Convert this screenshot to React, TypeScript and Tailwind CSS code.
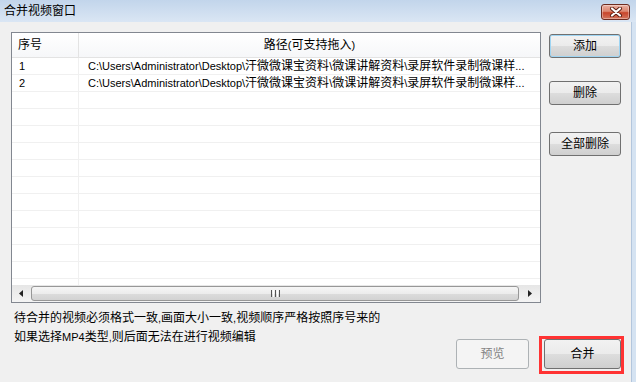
import React from "react";

function Mixed({ text }: { text: string }) {
  const parts = text.split(/([\x00-\x7f]+)/).filter((p) => p !== "");
  return (
    <>
      {parts.map((p, i) =>
        /^[\x00-\x7f]+$/.test(p) ? (
          <span key={i} className="text-[11px]">
            {p}
          </span>
        ) : (
          <span key={i}>{p}</span>
        )
      )}
    </>
  );
}

const rows = [
  "C:\\Users\\Administrator\\Desktop\\汗微微课宝资料\\微课讲解资料\\录屏软件录制微课样...",
  "C:\\Users\\Administrator\\Desktop\\汗微微课宝资料\\微课讲解资料\\录屏软件录制微课样...",
];

const btn =
  "w-[72px] h-[23px] rounded-[3px] border border-[#707070] bg-[linear-gradient(to_bottom,#f2f2f2_0%,#ebebeb_50%,#dddddd_50%,#cfcfcf_100%)] text-black flex items-center justify-center leading-none";

function CloseButton() {
  return (
    <div className="w-[29px] h-[16px] rounded-[3px] border border-[#6e2b20] bg-[linear-gradient(to_bottom,#eab0a3_0%,#dc8670_45%,#c8452b_55%,#d3755e_100%)] shadow-[inset_0_0_0_1px_rgba(255,255,255,0.35)] flex items-center justify-center">
      <svg width="14" height="10" viewBox="0 0 14 10">
        <path d="M3 1.5 L11 8.5 M11 1.5 L3 8.5" stroke="#5a1c12" strokeWidth="4" strokeLinecap="round" />
        <path d="M3 1.5 L11 8.5 M11 1.5 L3 8.5" stroke="#ffffff" strokeWidth="2.2" strokeLinecap="round" />
      </svg>
    </div>
  );
}

export default function App() {
  return (
    <div className="w-[636px] h-[382px] overflow-hidden bg-[#f0f0f0] flex flex-col text-[12px] text-black font-['Liberation_Sans','Noto_Sans_CJK_SC',sans-serif]">
      {/* title bar */}
      <div className="h-[22px] shrink-0 flex items-center pl-[4px] pr-[6px] bg-[linear-gradient(to_bottom,#c2d5eb,#dae6f4)]">
        <span className="leading-none">合并视频窗口</span>
        <div className="ml-auto pt-[1px]">
          <CloseButton />
        </div>
      </div>

      <div className="flex flex-1">
        <div className="flex-1 flex flex-col pl-[11px] pr-[7px] pt-[10px]">
          <div className="flex">
            {/* list view */}
            <div className="w-[530px] h-[271px] border border-[#828790] bg-white flex flex-col">
              <div className="h-[25px] shrink-0 flex border-b border-[#e3e3e3] bg-[linear-gradient(to_bottom,#ffffff,#f6f7f9)]">
                <div className="w-[67px] pl-[6px] flex items-center border-r border-[#e3e3e3]">序号</div>
                <div className="flex-1 flex items-center justify-center">
                  <Mixed text="路径(可支持拖入)" />
                </div>
              </div>
              <div className="flex-1 overflow-hidden">
                {Array.from({ length: 14 }).map((_, i) => (
                  <div key={i} className="h-[17px] flex border-b border-[#f0f0f0] leading-[16px]">
                    <div className="w-[67px] pl-[7px] border-r border-[#f0f0f0] whitespace-nowrap">
                      {i < rows.length && <span className="text-[11px]">{i + 1}</span>}
                    </div>
                    <div className="flex-1 pl-[9px] whitespace-nowrap overflow-hidden">
                      {i < rows.length && <Mixed text={rows[i]} />}
                    </div>
                  </div>
                ))}
              </div>
              {/* horizontal scrollbar */}
              <div className="h-[17px] shrink-0 flex items-center bg-[linear-gradient(to_bottom,#e6e6e6,#f4f4f4)]">
                <div className="w-[18px] h-full flex items-center justify-center">
                  <svg width="4" height="7" viewBox="0 0 4 7">
                    <path d="M4 0 L0 3.5 L4 7 Z" fill="#222" />
                  </svg>
                </div>
                <div className="ml-[1px] w-[488px] h-[15px] rounded-[3px] border border-[#979797] bg-[linear-gradient(to_bottom,#f6f6f6_0%,#ececec_50%,#dcdcdc_50%,#d2d2d2_100%)] flex items-center justify-center">
                  <div className="flex gap-[1px]">
                    <div className="w-[1px] h-[7px] bg-[#555]" />
                    <div className="w-[1px] h-[7px] bg-[#fff]" />
                    <div className="w-[1px] h-[7px] bg-[#555]" />
                    <div className="w-[1px] h-[7px] bg-[#fff]" />
                    <div className="w-[1px] h-[7px] bg-[#555]" />
                  </div>
                </div>
                <div className="flex-1 h-full flex items-center justify-center">
                  <svg width="4" height="7" viewBox="0 0 4 7">
                    <path d="M0 0 L4 3.5 L0 7 Z" fill="#222" />
                  </svg>
                </div>
              </div>
            </div>

            {/* right buttons */}
            <div className="ml-[8px] flex flex-col">
              <button className={`${btn} mt-[2px] h-[24px] border-[#3c7fb1] shadow-[inset_0_0_0_1px_#9fd5f3]`}>添加</button>
              <button className={`${btn} mt-[23px] h-[24px]`}>删除</button>
              <button className={`${btn} mt-[27px] h-[24px]`}>全部删除</button>
            </div>
          </div>

          {/* bottom area */}
          <div className="flex">
            <div className="ml-[3px] mt-[6px] leading-[19px]">
              <div>
                <Mixed text="待合并的视频必须格式一致,画面大小一致,视频顺序严格按照序号来的" />
              </div>
              <div>
                <Mixed text="如果选择MP4类型,则后面无法在进行视频编辑" />
              </div>
            </div>
            <div className="ml-auto mt-[33px] flex items-start">
              <button className="mt-[3px] w-[73px] h-[30px] rounded-[3px] border border-[#adb2b5] bg-[#f4f4f4] text-[#838383] flex items-center justify-center">
                预览
              </button>
              <div className="ml-[10px] border-[3px] border-[#ff3333] pl-[2px] pb-[2px]">
                <button className={`${btn} w-[77px] h-[30px]`}>合并</button>
              </div>
            </div>
          </div>
        </div>

        {/* right window frame */}
        <div className="w-[5px] shrink-0 border-l border-[#b3c6dd] bg-[#d5e3f2]" />
      </div>
    </div>
  );
}
